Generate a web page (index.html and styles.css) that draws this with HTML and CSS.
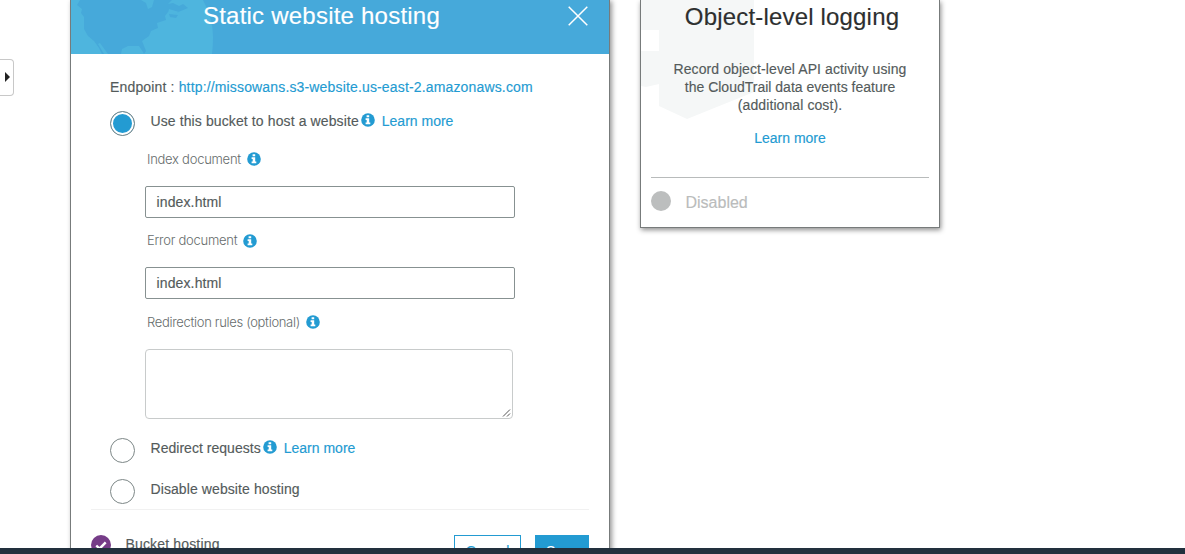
FILE: index.html
```html
<!DOCTYPE html>
<html lang="en">
<head>
<meta charset="utf-8">
<title>Static website hosting</title>
<link rel="stylesheet" href="styles.css">
</head>
<body>
<svg class="sprite" aria-hidden="true">
  <symbol id="info" viewBox="0 0 14 14">
    <circle cx="7" cy="7" r="6.8" fill="#239bd2"/>
    <path fill="#fff" d="M5.6 2.2h2.6v2H5.6zM4.6 5.2h3.6v4.3h1.1v1.8H4.6V9.5h1.1V7H4.6z"/>
  </symbol>
</svg>
<div class="page">
  <aside class="rail"><button class="rail-tab" aria-label="Expand"><span class="arrow"></span></button></aside>
  <section class="panel">
    <header class="panel-head">
      <svg class="globe" viewBox="0 0 144 54" aria-hidden="true">
        <path fill="#4eb5de" d="M0 0H132Q142 18 142 37Q142 46 141 54H0Z"/>
        <path fill="#46a9da" d="M9 0L6 5L11 9L10 13L13 17V29L17 36L23 41L28 48L31 54H33L27 44L29 43L37 54H50L51 49L57 46L68 46L72 52L73 54L75 51L73 46L71 41L78 36L80 31L87 28L86 23L95 20L94 16L97 12L105 13L117 8L112 4L108 6L102 3L97 4L101 0H83L81 7L77 9L75 3L70 0Z"/>
        <path fill="#4eb5de" d="M98 9L108 12L104 14L97 13Z"/>
        <path fill="#46a9da" d="M98 14l9 1-2 3-6-1z"/>
      </svg>
      <h1 class="title">Static website hosting</h1>
      <svg class="close" viewBox="0 0 20 20"><path d="M.7.7l18.6 18.6M19.3.7L.7 19.3" stroke="#fff" stroke-width="1.5"/></svg>
    </header>
    <div class="panel-body">
      <p class="endpoint">Endpoint : <a class="link">http://missowans.s3-website.us-east-2.amazonaws.com</a></p>
      <div class="option">
        <span class="radio checked"></span>
        <span class="option-text host">Use this bucket to host a website</span><svg class="info"><use href="#info"/></svg><a class="link more">Learn more</a>
      </div>
      <div class="fields">
        <label class="label"><span>Index document</span><svg class="info"><use href="#info"/></svg></label>
        <div class="input">index.html</div>
        <label class="label error"><span>Error document</span><svg class="info"><use href="#info"/></svg></label>
        <div class="input last">index.html</div>
        <label class="label"><span class="l-redirect">Redirection rules (optional)</span><svg class="info"><use href="#info"/></svg></label>
        <div class="textarea"><svg class="grip" viewBox="0 0 9 9"><path d="M1 8.5L8 1.5M5 8.5L8 5.5" stroke="#555" stroke-width="1"/></svg></div>
      </div>
      <div class="option second">
        <span class="radio"></span>
        <span class="option-text">Redirect requests</span><svg class="info"><use href="#info"/></svg><a class="link more">Learn more</a>
      </div>
      <div class="option">
        <span class="radio"></span>
        <span class="option-text disable">Disable website hosting</span>
      </div>
    </div>
    <footer class="panel-foot">
      <svg class="check" viewBox="0 0 20 20"><circle cx="10" cy="10" r="10" fill="#763c88"/><path d="M5.3 10.5l3.2 3.2 6.2-6.4" fill="none" stroke="#fff" stroke-width="2.4"/></svg>
      <span class="foot-text">Bucket hosting</span>
      <button class="btn cancel">Cancel</button>
      <button class="btn save">Save</button>
    </footer>
  </section>
  <section class="card">
    <svg class="card-art" viewBox="0 0 113 119" aria-hidden="true"><path fill="#f5f7f7" d="M0 0H113V92L46 119L18 106V84L5 87L0 86V51H18V30H0Z"/></svg>
    <h2 class="card-title">Object-level logging</h2>
    <p class="card-copy"><span class="wide">Record object-level API activity using</span><br>the CloudTrail data events feature<br><span class="wide">(additional cost).</span></p>
    <a class="link card-more">Learn more</a>
    <div class="status"><span class="dot"></span><span class="status-text">Disabled</span></div>
  </section>
</div>
<div class="bottom-bar"></div>
</body>
</html>
```
FILE: styles.css
```css
* { box-sizing: border-box; }
body { margin: 0; background: #fff; overflow: hidden; font: 14px/18px "Liberation Sans", Arial, sans-serif; color: #545b5b; -webkit-text-stroke: .15px; }
h1, h2, p { margin: 0; font-weight: 400; }
.sprite { position: absolute; width: 0; height: 0; }
.page { display: flex; align-items: flex-start; height: 554px; overflow: hidden; }
.link { color: #239bd2; }
.rail { width: 70px; flex: none; padding-top: 59px; }
.rail-tab { display: flex; align-items: center; width: 14px; height: 37px; padding: 0 0 2px 5px; background: #fff; border: 1px solid #c8c8c8; border-left: 0; border-radius: 0 4px 4px 0; }
.arrow { border: 5px solid transparent; border-left: 5px solid #222; border-right: 0; }
.panel { width: 540px; height: 580px; flex: none; border: 1px solid #777b7b; border-top: 0; background: #fff; box-shadow: 2px 1px 5px rgba(0,0,0,.42); }
.panel-head { position: relative; display: flex; justify-content: flex-end; height: 54px; background: #46a9da; color: #fff; }
.globe { position: absolute; left: 0; top: 0; width: 144px; height: 54px; }
.title { position: relative; flex: 1; padding: 1px 0 0 132px; font-size: 24px; line-height: 30px; letter-spacing: .22px; white-space: nowrap; }
.close { width: 20px; height: 20px; margin: 6px 21px 0 0; }
.panel-body { height: 456px; margin: 0 20px; padding: 24px 0 0 19px; border-bottom: 1px solid #f1f1f1; }
.endpoint { height: 33px; letter-spacing: .155px; white-space: nowrap; }
.option { display: flex; align-items: flex-start; height: 41px; white-space: nowrap; }
.radio { width: 25px; height: 25px; margin-right: 15.5px; border: 1px solid #7d8787; border-radius: 50%; }
.checked { background: #239bd2; box-shadow: inset 0 0 0 2px #fff; }
.option-text { padding-top: 1px; letter-spacing: .03px; }
.host { letter-spacing: .11px; }
.disable { letter-spacing: .09px; }
.info { width: 14px; height: 14px; margin-left: 2px; margin-top: 2px; flex: none; }
.more { margin-left: 7px; padding-top: 1px; }
.fields { margin: -2px 0 0 35px; }
.label { display: flex; height: 36px; padding-left: 2px; font: 300 13px/18px Inter, sans-serif; letter-spacing: -.26px; color: #666c6c; white-space: nowrap; -webkit-text-stroke: 0; }
.l-redirect { letter-spacing: -.32px; }
.label .info { margin-left: 6px; margin-top: 2px; }
.error .info { margin-top: 3px; }
.input { width: 370px; height: 32px; margin-bottom: 13px; padding: 6px 10.5px; letter-spacing: .13px; border: 1px solid #879191; border-radius: 2px; }
.last { margin-bottom: 14px; }
.textarea { display: flex; align-items: flex-end; justify-content: flex-end; width: 368px; height: 70px; border: 1px solid #c8cbcb; border-radius: 4px; padding: 1px; }
.grip { width: 9px; height: 9px; }
.second { margin-top: 19px; }
.panel-foot { display: flex; margin: 25px 20px 0; align-items: flex-start; }
.check { width: 20px; height: 20px; }
.foot-text { margin-left: 14.5px; letter-spacing: .16px; }
.btn { height: 32px; padding: 1px 0 0; font: inherit; line-height: 29px; border: 1px solid #239bd2; }
.cancel { width: 67px; margin-left: auto; color: #239bd2; background: #fff; }
.save { width: 54px; margin-left: 14px; color: #fff; background: #239bd2; }
.card { position: relative; width: 300px; height: 228px; margin-left: 30px; border: 1px solid #777b7b; border-top: 0; background: #fff; box-shadow: 1px 2px 5px rgba(0,0,0,.45); text-align: center; }
.card-art { position: absolute; left: 0; top: 0; width: 113px; height: 119px; }
.card-title { position: relative; padding-top: 2px; padding-left: 4px; font-size: 24px; line-height: 30px; letter-spacing: .18px; color: #2d2f2f; }
.card-copy { position: relative; margin-top: 28px; white-space: nowrap; }
.wide { letter-spacing: .09px; }
.card-more { display: block; margin-top: 15px; }
.status { display: flex; gap: 14.5px; margin: 30px 10px 0; padding-top: 13px; border-top: 1px solid #b8bbbb; color: #babcbc; font-size: 16px; line-height: 22px; text-align: left; }
.status-text { padding-top: 1px; }
.dot { width: 20px; height: 20px; border-radius: 50%; background: #bcbebe; }
.bottom-bar { position: fixed; left: 0; right: 0; bottom: 0; height: 6px; background: #22303d; }
```
